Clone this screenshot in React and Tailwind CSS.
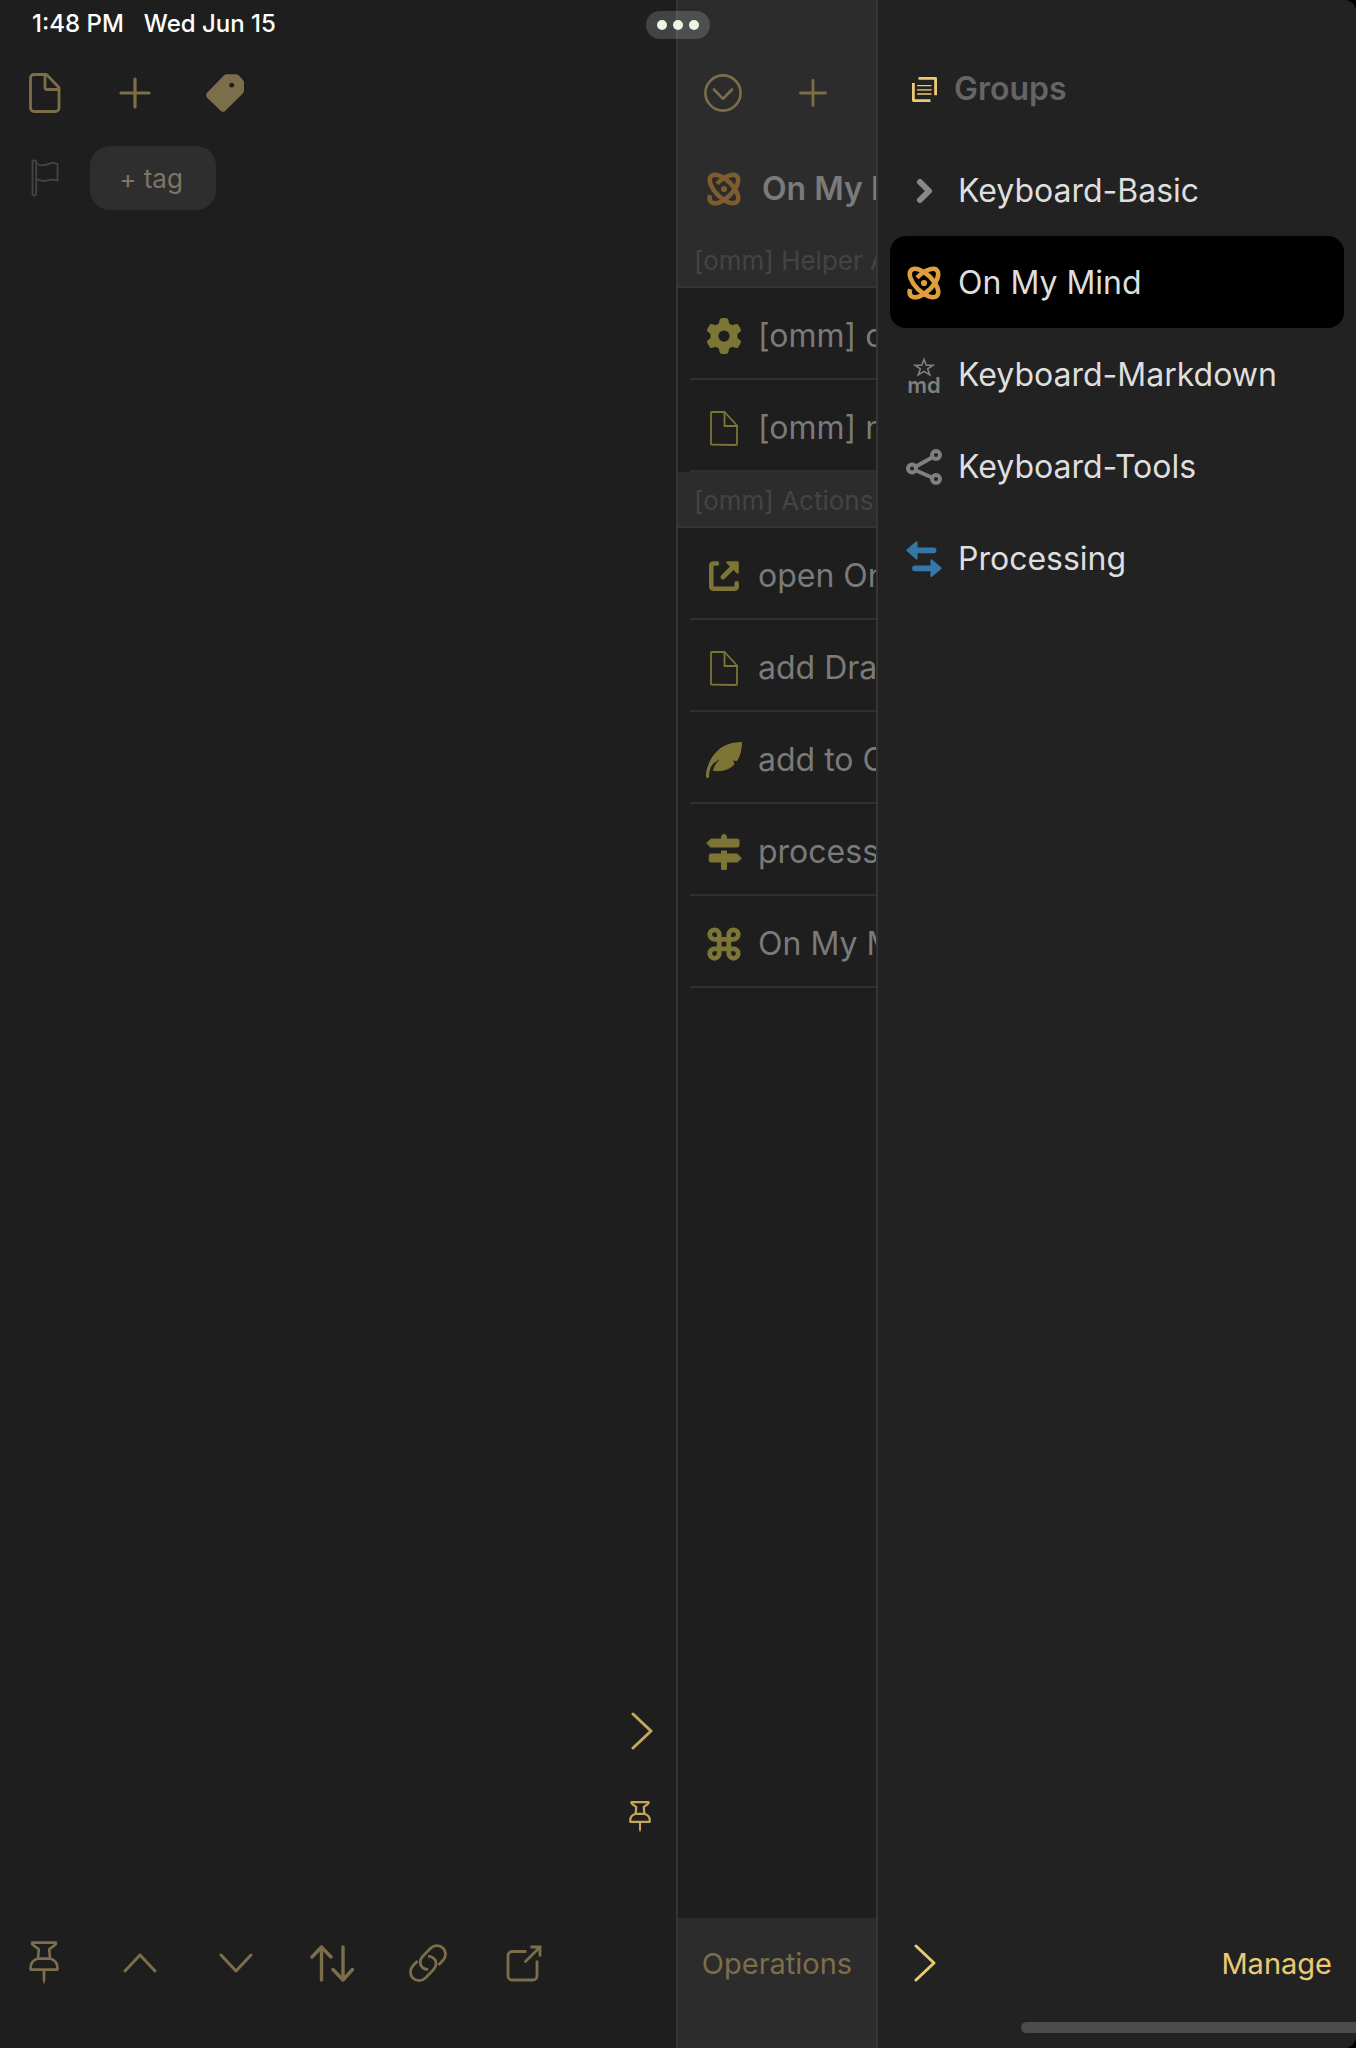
import { Command } from 'lucide-react'
import { FaGear } from 'react-icons/fa6'

function Svg({ w, h, stroke = 3, className = '', children }) {
  return (
    <svg
      width={w}
      height={h}
      viewBox={`0 0 ${w} ${h}`}
      fill="none"
      stroke="currentColor"
      strokeWidth={stroke}
      strokeLinecap="round"
      strokeLinejoin="round"
      className={`shrink-0 ${className}`}
      aria-hidden="true"
    >
      {children}
    </svg>
  )
}

const FileIcon = () => (
  <Svg w={32} h={40} stroke={2.8}>
    <path d="M5 1.5H17.5L30 14.5V35A3.5 3.5 0 0 1 26.5 38.5H5A3.5 3.5 0 0 1 1.5 35V5A3.5 3.5 0 0 1 5 1.5Z" />
    <path d="M16 2V14.5A2 2 0 0 0 18 16.5H29.5" />
  </Svg>
)

const ThinFileIcon = () => (
  <Svg w={28} h={35} stroke={1.8}>
    <path d="M2 1H14.5L27 14.5V33A1 1 0 0 1 26 34L2 33.6A1 1 0 0 1 1 32.6V2A1 1 0 0 1 2 1Z" />
    <path d="M14.5 1V15H27" />
  </Svg>
)

const PlusIcon = ({ size = 32 }) => (
  <Svg w={size} h={size} stroke={size > 30 ? 3.2 : 2.8}>
    <path d={size > 30 ? 'M16 2V30M2 16H30' : 'M14 1.5V26.5M1.5 14H26.5'} />
  </Svg>
)

const TagIcon = () => (
  <Svg w={38} h={38} stroke={2}>
    <path
      fill="currentColor"
      d="M21 1.2H30Q31.2 1.2 32 2L36.2 6.6Q37 7.4 37 8.6V16.8Q37 18 36.1 18.9L18.6 36.1Q17 37.4 15.4 36.1L1.8 23Q.4 21.2 1.8 19.4L18.6 2.2Q19.6 1.2 21 1.2Z"
    />
    <circle cx="25.7" cy="11.2" r="2.4" fill="#1e1e1e" stroke="none" />
  </Svg>
)

const FlagIcon = () => (
  <Svg w={28} h={40} stroke={1.8}>
    <path d="M1.5 3.5A2 2 0 0 1 5.2 3.5V5.4C10 9 17 6.5 20 5.2Q23.5 4.4 26.5 6V22.8C22 20.6 20 21.4 16.5 22.4C11.5 24 8 22.4 5.2 20.8V36.5A2 2 0 0 1 1.5 36.5Z" />
    <path d="M5.2 5V21" />
  </Svg>
)

const CircleDownIcon = () => (
  <Svg w={38} h={38} stroke={2.6}>
    <circle cx="19" cy="19" r="17.6" />
    <path d="M10 15.5L19 24.8L28 15.5" />
  </Svg>
)

const AtomIcon = () => (
  <Svg w={36} h={36} stroke={4.6}>
    <g strokeLinecap="butt">
      <ellipse cx="18" cy="18" rx="18.2" ry="8.6" transform="rotate(45 18 18)" />
      <path d="M-14.1 -5.5A18.2 8.6 0 1 0 -1.2 -8.6" transform="translate(18 18) rotate(-45)" />
      <circle cx="18" cy="18" r="3.1" fill="currentColor" stroke="none" />
    </g>
  </Svg>
)

const GroupsIcon = () => (
  <Svg w={25} h={25} stroke={2.8}>
    <path strokeLinecap="butt" d="M6.5 1.4H23.6V18.3M1.4 6V23.6H18.5" />
    <path strokeWidth="1.4" d="M5.6 8.6H19M5.6 17H19" />
    <path strokeWidth="1.8" opacity=".75" d="M5.6 12.8H19" />
  </Svg>
)

const OpenIcon = () => (
  <Svg w={32} h={32} stroke={4.6}>
    <path d="M9 3.5H5.5A2 2 0 0 0 3.3 5.5V26.5A2 2 0 0 0 5.5 28.7H26.5A2 2 0 0 0 28.7 26.5V23.2" />
    <path d="M15 17L25 7" strokeWidth="5" />
    <path d="M19.5 2.4H29.6V12.5Z" fill="currentColor" strokeWidth="2.4" />
  </Svg>
)

const FeatherIcon = () => (
  <Svg w={36} h={36} stroke={1}>
    <path
      fill="currentColor"
      d="M35.5 .5C35.6 7 34 13.5 31 18.5L26.5 18L28 22.2C23.5 27.5 15 29.6 7.5 28.4C8.3 24.5 10.4 21.2 13.2 18.4C11.6 16.6 8.6 16.8 6.2 19C8.6 8 20 .8 35.5 .5Z"
    />
    <path d="M1.6 34.5C1.2 27 4.6 20.2 10.2 17.8" strokeWidth="3" />
    <path d="M1.6 34.5C1.2 21 10 6 28 2" strokeWidth="2.4" />
  </Svg>
)

const SignpostIcon = () => (
  <Svg w={36} h={36} stroke={1}>
    <path
      fill="currentColor"
      d="M.8 8.9L4.8 5.1H15.5V3A2.5 2.5 0 0 1 20.5 3V5.1H31.5Q33 5.1 33 6.6V11.4Q33 13 31.5 13H4.8Z"
    />
    <path
      fill="currentColor"
      d="M35.2 24L31.2 20H20.5V17H15.5V20H4.8Q3.2 20 3.2 21.5V26.5Q3.2 28 4.8 28H15.5V35.4H20.5V28H31.2Z"
    />
  </Svg>
)

const MarkdownIcon = () => (
  <span className="flex w-9 flex-col items-center text-[#808080]">
    <Svg w={24} h={20} stroke={1.6}>
      <path
        strokeLinejoin="miter"
        d="M12 2.5L14.3 8.2H21L15.7 11.9L17.8 18L12 14.4L6.2 18L8.3 11.9L3 8.2H9.7Z"
      />
    </Svg>
    <span className="text-[22px] leading-4 font-semibold">md</span>
  </span>
)

const ShareIcon = () => (
  <Svg w={36} h={36} stroke={4}>
    <circle cx="6" cy="19.5" r="4" />
    <circle cx="30" cy="6" r="4" />
    <circle cx="30" cy="30" r="4" />
    <path d="M10 17.5L26 8.5M10 21.5L26 28.5" />
  </Svg>
)

const SwapIcon = () => (
  <Svg w={36} h={36} stroke={2}>
    <path d="M1.4 9.3L10.6 1.2V17.6Z" fill="currentColor" />
    <path d="M10 9.3H27.5M9 27.3H26" strokeWidth="5.8" />
    <path d="M34.6 27.3L25.4 19.2V35Z" fill="currentColor" />
  </Svg>
)

const GroupChevron = () => (
  <Svg w={36} h={36} stroke={6}>
    <path d="M14 9L23 18L14 27" />
  </Svg>
)

const PinIcon = ({ className = 'h-11 w-[30px]', stroke = 2.6 }) => (
  <svg
    viewBox="0 0 30 44"
    fill="none"
    stroke="currentColor"
    strokeWidth={stroke}
    strokeLinejoin="round"
    className={className}
    aria-hidden="true"
  >
    <path d="M3.2 1.6H26.8V3.2C24.5 5.5 22.5 6.6 20.2 8.2L21 17.6H9L9.8 8.2C7.5 6.6 5.5 5.5 3.2 3.2Z" />
    <path d="M9 17.6C4.5 19 1.6 22.5 1.6 26.6V28.6H28.4V26.6C28.4 22.5 25.5 19 21 17.6" />
    <path d="M13.6 29H16.4V39L15 43.5L13.6 39Z" fill="currentColor" stroke="none" />
  </svg>
)

const UpIcon = () => (
  <Svg w={34} h={20} stroke={3}>
    <path d="M2 18L17 2L32 18" />
  </Svg>
)

const DownIcon = () => (
  <Svg w={34} h={20} stroke={3}>
    <path d="M2 2L17 18L32 2" />
  </Svg>
)

const RightIcon = () => (
  <Svg w={22} h={38} stroke={3}>
    <path d="M2 2L20 19L2 36" />
  </Svg>
)

const SortIcon = () => (
  <Svg w={44} h={38} stroke={3.4}>
    <path d="M11.5 36V3M2 13L11.5 3L21 13" />
    <path d="M33 3V36M23 25.5L33 36L42.5 25.5" />
  </Svg>
)

const LinkIcon = () => (
  <Svg w={38} h={40} stroke={2.8}>
    <path
      strokeLinecap="butt"
      d="M8.6 18L4.4 22.3C.6 26.2 .6 31.6 3.8 35C7.4 38.6 13 38.4 16.4 35L24.4 26.8C28 23 28 18 24.6 15.2C23 13.8 21 13.2 19 13.4"
    />
    <path
      strokeLinecap="butt"
      d="M29.4 22L33.8 17.6C37.4 13.8 37.4 8.4 34.2 5.2C30.6 1.6 25 1.8 21.6 5.2L13.8 13.2C10.4 16.8 10.4 21.8 13.6 24.6C15.2 26 17.2 26.6 19.2 26.4"
    />
  </Svg>
)

const ShareOutIcon = () => (
  <Svg w={36} h={38} stroke={2.8}>
    <path strokeLinecap="butt" d="M20.5 7.5H6A4 4 0 0 0 2 11.5V32A4 4 0 0 0 6 36H27A4 4 0 0 0 31 32V16.5" />
    <path d="M19.5 17.5L33 4" />
    <path strokeLinecap="butt" strokeLinejoin="miter" d="M24.5 3H34V12.5" />
  </Svg>
)

const helperActions = [
  { label: '[omm] configure', icon: <FaGear size={36} /> },
  { label: '[omm] new', icon: <ThinFileIcon /> },
]

const actions = [
  { label: 'open On My Mind', icon: <OpenIcon /> },
  { label: 'add Draft', icon: <ThinFileIcon /> },
  { label: 'add to On My Mind', icon: <FeatherIcon /> },
  { label: 'process', icon: <SignpostIcon /> },
  { label: 'On My Mind', icon: <Command size={38} strokeWidth={3} className="shrink-0" /> },
]

const groups = [
  { label: 'Keyboard-Basic', icon: <GroupChevron />, color: 'text-[#888888]' },
  { label: 'On My Mind', icon: <AtomIcon />, color: 'text-[#e09f3e]', selected: true },
  { label: 'Keyboard-Markdown', icon: <MarkdownIcon />, color: 'text-[#808080]' },
  { label: 'Keyboard-Tools', icon: <ShareIcon />, color: 'text-[#808080]' },
  { label: 'Processing', icon: <SwapIcon />, color: 'text-[#3478a8]' },
]

const editorTools = [
  { label: 'Pin', icon: <PinIcon /> },
  { label: 'Previous', icon: <UpIcon /> },
  { label: 'Next', icon: <DownIcon /> },
  { label: 'Arrange', icon: <SortIcon /> },
  { label: 'Link', icon: <LinkIcon /> },
  { label: 'Open externally', icon: <ShareOutIcon /> },
]

function IconButton({ label, children, className = 'h-[90px] w-[90px]' }) {
  return (
    <button type="button" aria-label={label} className={`flex shrink-0 items-center justify-center ${className}`}>
      {children}
    </button>
  )
}

function SectionHeading({ children }) {
  return (
    <h3 className="flex h-14 items-center border-b-2 border-[#353535] bg-[#2c2c2c] pt-0.5 pl-4 text-[26px] text-[#444444]">
      {children}
    </h3>
  )
}

function ActionList({ items }) {
  return (
    <ul>
      {items.map((item) => (
        <li key={item.label} className="ml-3 border-b-2 border-[#303030]">
          <button
            type="button"
            className="flex h-[90px] w-full items-center gap-4 pt-1.5 pl-4 text-[32px] text-[#7a7a7a]"
          >
            <span className="flex w-9 shrink-0 justify-center text-[#7d7535]">{item.icon}</span>
            {item.label}
          </button>
        </li>
      ))}
    </ul>
  )
}

function Editor() {
  return (
    <main className="flex min-w-0 flex-1 flex-col text-[#7c6e4a]">
      <div className="flex h-12 items-center gap-5 pl-8 text-2xl font-medium text-white">
        <span>1:48 PM</span>
        <span>Wed Jun 15</span>
      </div>
      <div className="flex">
        <IconButton label="Drafts">
          <FileIcon />
        </IconButton>
        <IconButton label="New draft">
          <PlusIcon />
        </IconButton>
        <IconButton label="Tags">
          <TagIcon />
        </IconButton>
      </div>
      <div className="mt-2 flex">
        <IconButton label="Flag" className="h-16 w-[90px] text-[#444444]">
          <FlagIcon />
        </IconButton>
        <button type="button" className="h-16 w-[126px] rounded-[20px] bg-[#2e2e2e] pr-1 text-[26px] text-[#7d7666]">
          + tag
        </button>
      </div>
      <div className="mt-auto mb-[58px] flex flex-col self-end text-[#c6a75c]">
        <IconButton label="Hide actions" className="h-[86px] w-[68px]">
          <RightIcon />
        </IconButton>
        <IconButton label="Pin actions" className="h-[86px] w-[68px] pr-1">
          <PinIcon className="h-8 w-[22px]" stroke={3} />
        </IconButton>
      </div>
      <div className="flex h-[130px] gap-2 pb-10">
        {editorTools.map((tool) => (
          <IconButton key={tool.label} label={tool.label} className="h-[90px] w-[88px]">
            {tool.icon}
          </IconButton>
        ))}
      </div>
    </main>
  )
}

function ActionsPane() {
  return (
    <section className="flex w-[202px] shrink-0 flex-col overflow-hidden border-x-2 border-[#353535] whitespace-nowrap">
      <div className="bg-[#2c2c2c] pt-12 text-[#7c6e4a]">
        <div className="flex">
          <IconButton label="Action options">
            <CircleDownIcon />
          </IconButton>
          <IconButton label="New action">
            <PlusIcon size={28} />
          </IconButton>
        </div>
        <h2 className="flex h-[94px] items-center gap-5 pt-2 pl-7 text-[32px] font-semibold text-[#7a7a7a]">
          <span className="text-[#7d5c2e]">
            <AtomIcon />
          </span>
          On My Mind
        </h2>
      </div>
      <SectionHeading>[omm] Helper Actions</SectionHeading>
      <ActionList items={helperActions} />
      <SectionHeading>[omm] Actions</SectionHeading>
      <ActionList items={actions} />
      <div className="mt-auto h-[130px] bg-[#2c2c2c] pb-10">
        <button type="button" className="h-[92px] w-full text-[29px] text-[#7c6e4a]">
          Operations
        </button>
      </div>
    </section>
  )
}

function GroupsPane() {
  return (
    <aside className="flex w-[478px] shrink-0 flex-col rounded-r-xl bg-[#222222]">
      <h2 className="mt-12 mb-4 flex h-20 items-center gap-3 pt-0.5 pl-7 text-[32px] font-semibold text-[#656565]">
        <span className="flex w-9 justify-center text-[#ecca74]">
          <GroupsIcon />
        </span>
        Groups
      </h2>
      <nav className="flex flex-col px-3">
        {groups.map((group) => (
          <button
            key={group.label}
            type="button"
            aria-current={group.selected}
            className={`flex h-[92px] items-center gap-4 rounded-2xl pt-0.5 pl-4 text-[32px] text-[#dedede] ${
              group.selected ? 'bg-black' : ''
            }`}
          >
            <span className={`flex w-9 shrink-0 justify-center ${group.color}`}>{group.icon}</span>
            {group.label}
          </button>
        ))}
      </nav>
      <div className="mt-auto flex h-[90px] items-center justify-between pr-6 pl-9 text-[#ecca74]">
        <button type="button" aria-label="Hide groups">
          <RightIcon />
        </button>
        <button type="button" className="pt-0.5 text-[29px]">
          Manage
        </button>
      </div>
      <div className="flex h-10 justify-end pt-3.5">
        <div className="h-[11px] w-[335px] rounded-l-full bg-[#4b4b4b]" />
      </div>
    </aside>
  )
}

export default function App() {
  return (
    <div className="bg-black font-['Inter',sans-serif]">
      <div className="relative flex min-h-screen rounded-r-xl bg-[#1e1e1e]">
        <Editor />
        <ActionsPane />
        <GroupsPane />
        {/* Multitasking handle, floats over the split between panes */}
        <div className="absolute top-[11px] left-1/2 flex h-7 w-16 -translate-x-1/2 items-center justify-center gap-1.5 rounded-full bg-white/17">
          <span className="size-2.5 rounded-full bg-[#ebf6e3]" />
          <span className="size-2.5 rounded-full bg-[#ebf6e3]" />
          <span className="size-2.5 rounded-full bg-[#ebf6e3]" />
        </div>
      </div>
    </div>
  )
}
